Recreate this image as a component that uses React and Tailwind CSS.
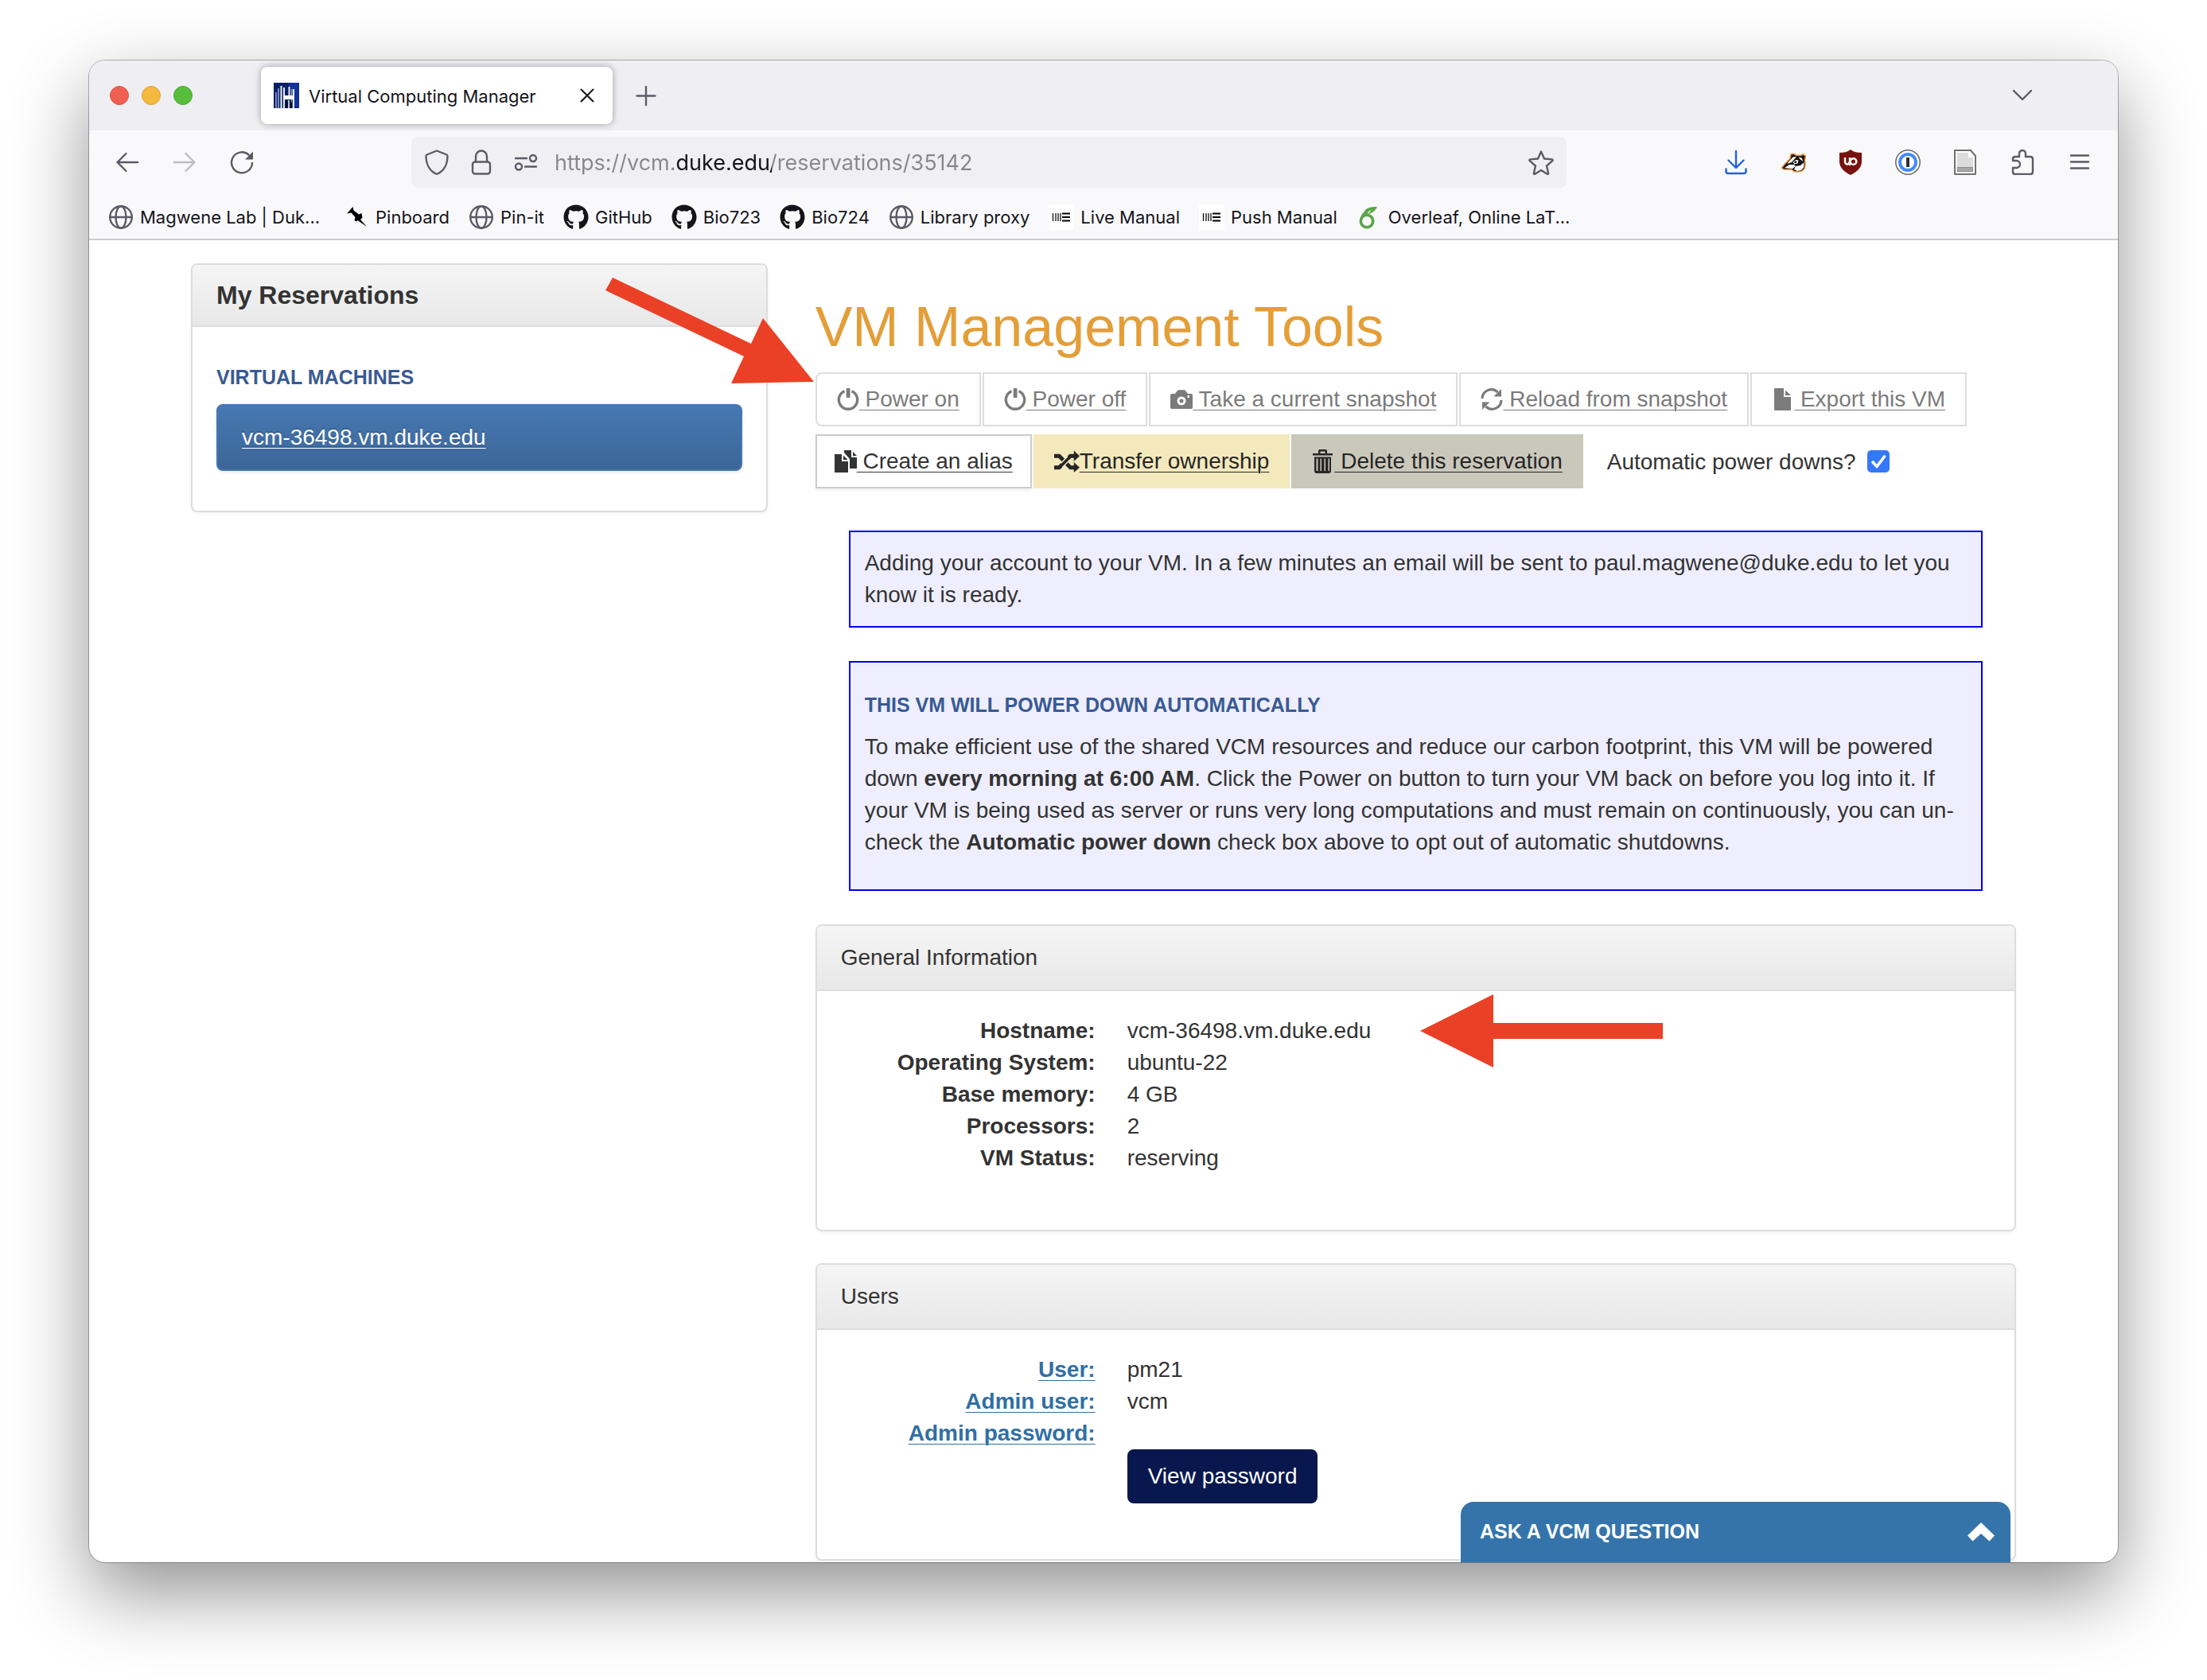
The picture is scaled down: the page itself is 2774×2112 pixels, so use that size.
import React from "react";
import { FaGithub } from "react-icons/fa";

const UI = "font-['Inter','Liberation_Sans',sans-serif]";

/* ---------- browser icons ---------- */

function Icon({ className = "h-8 w-8", children, box = "0 0 32 32" }) {
  return (
    <svg viewBox={box} className={`shrink-0 ${className}`} fill="none" stroke="currentColor" strokeWidth="2.4" strokeLinecap="round" strokeLinejoin="round" aria-hidden="true">
      {children}
    </svg>
  );
}

const ArrowLeft = () => (
  <Icon><path d="M29 16H3.5M14.500 5L3.500 16l11 11" /></Icon>
);
const ArrowRight = () => (
  <Icon><path d="M3 16h25.500M17.500 5l11 11-11 11" /></Icon>
);
const Reload = () => (
  <Icon>
    <path d="M29 17A13 13 0 1 1 24.500 6.500" />
    <path d="M30 2.500V12.500H20z" fill="currentColor" stroke="none" />
  </Icon>
);
const Globe = () => (
  <Icon>
    <circle cx="16" cy="16" r="13.800" />
    <ellipse cx="16" cy="16" rx="6.500" ry="13.800" />
    <path d="M2.500 16h27" />
  </Icon>
);
const Shield = () => (
  <Icon><path d="M16 1.500L28.500 6.500c.8.400 1 .9 1 1.800C29.500 19 24.500 27 17 30.500q-1 .5-2 0C7.500 27 2.500 19 2.500 8.300c0-.9.200-1.400 1-1.800z" /></Icon>
);
const Lock = () => (
  <Icon>
    <rect x="5" y="15.500" width="22" height="15" rx="3" />
    <path d="M9 15V8.500a7 7 0 0 1 14 0V15" />
  </Icon>
);
const Sliders = () => (
  <Icon>
    <path d="M3 11h14M15 21.500h14" />
    <circle cx="25" cy="11" r="4" />
    <circle cx="7" cy="21.500" r="4" />
  </Icon>
);
const Star = () => (
  <Icon><path d="M16 2.500l4 9 9.700.9c1 .1 1.300 1 .6 1.700L23 20.500l2.100 9.300c.2 1-.6 1.500-1.400 1L16 26l-7.700 4.800c-.8.500-1.600 0-1.400-1L9 20.500l-7.300-6.400c-.7-.7-.4-1.600.6-1.700l9.700-.9z" /></Icon>
);
const Download = () => (
  <Icon className="h-8 w-8 text-[#2161dc]">
    <path d="M16 2v20M6.500 13.500l9.500 9.500 9.500-9.500M3.500 24.500v3c0 1.500 1 2.500 2.500 2.500h20c1.500 0 2.500-1 2.500-2.500v-3" />
  </Icon>
);
const Badger = () => (
  <svg viewBox="0 0 32 32" className="h-8 w-8" aria-hidden="true">
    <path d="M1.500 23L6 17.500l6-6L13 6l3-.8 3.500 2 6 .3 2.500-1.500 3.500 2-1 5 .5 5.500-1 5.500-3 3-5 1-5-.5-3-2.500-10 0z" fill="#141414" stroke="#e88a33" strokeWidth="1.500" strokeLinejoin="round" />
    <path d="M8 18l7.500-8.500 4.500-.5-6 7z" fill="#fff" />
    <path d="M5 23l6-4 6 0 2 2-4 3z" fill="#fff" />
    <path d="M22.500 9.500l4 1 2 4.500-3.500-2.500z" fill="#fff" />
    <path d="M19 21l6-1 4.500-4-.5 6.500-3 3.500-5 1-4-2z" fill="#fff" />
    <path d="M15.500 16l3.500-3 3.500.5-1 4-4 1z" fill="#fff" />
    <circle cx="18.800" cy="15.800" r="1.500" fill="#141414" />
  </svg>
);
const UBlock = () => (
  <svg viewBox="0 0 32 32" className="h-8 w-8" aria-hidden="true">
    <path d="M16 0c4 3 8 4 14 4v11c0 8-6 13-14 17C8 28 2 23 2 15V4c6 0 10-1 14-4z" fill="#78120f" />
    <path d="M9 10v5.500a3 3 0 0 0 6 0V10M14 15.500q0 3.500 2 3.800" fill="none" stroke="#fff" strokeWidth="2.400" />
    <circle cx="19.500" cy="15" r="3.800" fill="none" stroke="#fff" strokeWidth="2.400" />
  </svg>
);
const OnePassword = () => (
  <svg viewBox="0 0 32 32" className="h-8 w-8" aria-hidden="true">
    <circle cx="16" cy="16" r="15.200" fill="#fff" stroke="#666" strokeWidth="1.500" />
    <circle cx="16" cy="16" r="10" fill="#fff" stroke="#438afa" strokeWidth="4" />
    <rect x="14" y="10" width="4" height="12" fill="#2f2f33" />
  </svg>
);
const DocIcon = () => (
  <svg viewBox="0 0 32 32" className="h-8 w-8" aria-hidden="true">
    <path d="M3 1h20l6 7v23H3z" fill="#fff" stroke="#707070" strokeWidth="2" strokeLinejoin="round" />
    <path d="M6 4h14v6h6v18H6z" fill="#dcdcdc" />
    <rect x="6.500" y="22.500" width="19" height="5" fill="#a8a8a8" stroke="#8c8c8c" />
  </svg>
);
const Puzzle = () => (
  <Icon><path d="M12 9V5a4 4 0 0 1 8 0v4h6c1.800 0 3 1 3 3v16c0 2-1.200 3-3 3H7c-2 0-3-1-3-3v-5h4.500a4 4 0 0 0 0-9H4v-2c0-2 1-3 3-3z" /></Icon>
);
const Menu = () => (
  <Icon><path d="M5 7.500h22M5 15.500h22M5 23.500h22" /></Icon>
);
const Pin = () => (
  <svg viewBox="0 0 32 32" className="h-8 w-8 shrink-0" fill="#000" aria-hidden="true">
    <path d="M11.500 3l1 4.500 6.500 5 3.500-1.500 1 5.500-2.500 2.500 8 9-11.500-8-1.500 1.500-2.500-1.500 1-4-5-5.500-5.500 1z" />
  </svg>
);
const Barcode = () => (
  <svg viewBox="0 0 32 32" className="h-8 w-8 shrink-0 bg-white" stroke="#000" aria-hidden="true">
    <path d="M5.500 11v10M9 11v10M12 11v10M15 11v10" strokeWidth="1.200" />
    <path d="M17 11.500h10M17 16h10M17 20.500h10" strokeWidth="1.800" />
  </svg>
);
const Overleaf = () => (
  <svg viewBox="0 0 32 32" className="h-8 w-8 shrink-0" fill="none" aria-hidden="true">
    <circle cx="13" cy="21" r="7.700" stroke="#59a548" strokeWidth="3.600" />
    <path d="M5 20C5 12 9 8 15 9l-2 4c-3 0-5 2-6 6z" fill="#59a548" />
    <path d="M9 11C11 4 17 3 26 3c-2 4-5 8-12 9l5-5c-4 1-6 3-7 6z" fill="#59a548" />
  </svg>
);
const Favicon = () => (
  <svg viewBox="0 0 32 32" className="h-8 w-8 shrink-0" aria-hidden="true">
    <rect width="32" height="32" fill="#0a1f66" />
    <path d="M18 0h14v32h-5z" fill="#12329a" />
    <path d="M3 12v20M6 7v25M22.500 8v24" stroke="#8fa0c4" strokeWidth="1.600" />
    <path d="M9.500 4v28M13 6v26M19.500 5v14M25 8v24" stroke="#e6ebf3" strokeWidth="2" />
    <path d="M12 16h13v5H12z" fill="#fff" />
    <path d="M14 32v-7l2-2 2 2v7zM20 32v-7l1.500-2 1.500 2v7z" fill="#0a1230" />
    <path d="M19 22v10" stroke="#c9d2e2" strokeWidth="1.800" />
  </svg>
);

/* ---------- page glyphs ---------- */

function Glyph({ children, className = "h-7 w-7", box = "0 0 28 28" }) {
  return (
    <svg viewBox={box} className={`shrink-0 ${className}`} fill="currentColor" aria-hidden="true">
      {children}
    </svg>
  );
}
const Power = () => (
  <Glyph>
    <path d="M9.500 3.800A11.700 11.700 0 1 0 18.500 3.800" fill="none" stroke="currentColor" strokeWidth="3.400" />
    <rect x="11.700" y="0" width="4.800" height="12" rx="1" />
  </Glyph>
);
const Camera = () => (
  <Glyph>
    <path fillRule="evenodd" d="M2 7h4l3-4q.8-.8 2-.8h6q1.200 0 2 .8l3 4h4q2 0 2 2v15q0 2-2 2H2q-2 0-2-2V9q0-2 2-2zm12 3.500a5.500 5.500 0 1 0 0 11 5.500 5.500 0 0 0 0-11zm0 3a2.500 2.500 0 1 1 0 5 2.500 2.500 0 0 1 0-5zM21.500 9v3h2.500V9z" />
  </Glyph>
);
const Refresh = () => (
  <Glyph>
    <path d="M2 13A11.500 11.500 0 0 1 21.500 5" fill="none" stroke="currentColor" strokeWidth="3.200" />
    <path d="M26 1v9.500h-9.500z" />
    <path d="M26 15A11.500 11.500 0 0 1 6.500 23" fill="none" stroke="currentColor" strokeWidth="3.200" />
    <path d="M2 27v-9.500h9.500z" />
  </Glyph>
);
const FileIcon = () => (
  <Glyph>
    <path d="M3 1q0-1 1-1h11v11h9v16q0 1-1 1H4q-1 0-1-1z" />
    <path d="M17 2.500l7 6.500h-7z" />
  </Glyph>
);
const Copy = () => (
  <Glyph>
    <path d="M0 5h9v9h8v14H0z" />
    <path d="M11 6.500l5.500 5.500H11z" />
    <path d="M12 0h9v9h7v14h-9V11l-7-8z" />
    <path d="M23 2l5 5h-5z" />
  </Glyph>
);
const Shuffle = () => (
  <Glyph className="h-7 w-8" box="0 0 33 28">
    <path d="M0 7h6.500L21 22h5M0 22h6.500L21 7h5" fill="none" stroke="currentColor" strokeWidth="5" />
    <path d="M25.500 0l7.500 7-7.500 7zM25.500 15l7.500 7-7.500 6.500z" />
    <path d="M8.500 16.500l9-9M11 21.500l9-9" stroke="#f4e9bd" strokeWidth="1.500" />
  </Glyph>
);
const Trash = () => (
  <Glyph className="h-8 w-7" box="0 0 28 32">
    <path fillRule="evenodd" d="M10 1h7q2 0 2 2v3h7v2.500H1V6h7V3q0-2 2-2zm.5 2.500V6h6V3.500zM3 10.500h21V28q0 3-3 3H6q-3 0-3-3zm2.500 2V28h2V12.500zm5 0V28h1.500V12.500zm5 0V28H17V12.500zm5 0V28h1.500V12.500z" />
  </Glyph>
);

/* ---------- parts ---------- */

const bookmarks = [
  { label: "Magwene Lab | Duk...", icon: <Globe />, wide: true },
  { label: "Pinboard", icon: <Pin /> },
  { label: "Pin-it", icon: <Globe /> },
  { label: "GitHub", icon: <FaGithub className="h-8 w-8 shrink-0 text-[#15141a]" /> },
  { label: "Bio723", icon: <FaGithub className="h-8 w-8 shrink-0 text-[#15141a]" /> },
  { label: "Bio724", icon: <FaGithub className="h-8 w-8 shrink-0 text-[#15141a]" /> },
  { label: "Library proxy", icon: <Globe /> },
  { label: "Live Manual", icon: <Barcode /> },
  { label: "Push Manual", icon: <Barcode /> },
  { label: "Overleaf, Online LaT...", icon: <Overleaf /> },
];

function Chrome() {
  return (
    <header className={`${UI} text-[#15141a]`}>
      <div className="flex h-22 items-center bg-[#efeef3] pl-[26px] pr-[108px]">
        <div className="mr-[86px] flex gap-4">
          <button aria-label="Close window" className="h-6 w-6 rounded-full border border-[#d9584a] bg-[#f06051]" />
          <button aria-label="Minimize window" className="h-6 w-6 rounded-full border border-[#dba239] bg-[#f6b940]" />
          <button aria-label="Zoom window" className="h-6 w-6 rounded-full border border-[#4ba534] bg-[#57bf3c]" />
        </div>
        <div className="flex h-18 w-[442px] items-center gap-3 rounded-lg bg-white px-4 shadow-[0_0_8px_rgba(0,0,0,0.35)]">
          <Favicon />
          <span className="grow pt-0.5 text-[22px]">Virtual Computing Manager</span>
          <button aria-label="Close tab" className="mr-1">
            <Icon className="h-6 w-6" box="0 0 24 24"><path d="M4.500 4.500l15 15M19.500 4.500l-15 15" strokeWidth="2" /></Icon>
          </button>
        </div>
        <button aria-label="New tab" className="ml-7 text-[#5b5b66]">
          <Icon className="h-7 w-7" box="0 0 28 28"><path d="M14 3v23M2.500 14.500h23" /></Icon>
        </button>
        <button aria-label="List all tabs" className="ml-auto text-[#5b5b66]">
          <Icon className="h-6 w-6" box="0 0 24 24"><path d="M1 6l11 11L23 6" /></Icon>
        </button>
      </div>

      <div className="flex h-20 items-center bg-[#f9f9fb] pl-8 pr-8 text-[#5b5b66]">
        <div className="flex gap-10">
          <button aria-label="Back"><ArrowLeft /></button>
          <button aria-label="Forward" className="text-[#bdbdc1]"><ArrowRight /></button>
          <button aria-label="Reload"><Reload /></button>
        </div>
        <div className="ml-[197px] flex h-16 w-[1452px] items-center gap-6 rounded-lg bg-[#f0eff4] px-4">
          <Shield />
          <Lock />
          <Sliders />
          <input
            aria-label="Address"
            defaultValue="https://vcm.duke.edu/reservations/35142"
            className="-ml-1 grow bg-[linear-gradient(90deg,#87878c_0_153px,#15141a_153px_273px,#87878c_273px)] bg-clip-text pt-0.5 text-[27px] text-transparent outline-none"
          />
          <button aria-label="Bookmark this page"><Star /></button>
        </div>
        <div className="ml-auto flex gap-10">
          <button aria-label="Downloads"><Download /></button>
          <button aria-label="Privacy Badger"><Badger /></button>
          <button aria-label="uBlock Origin"><UBlock /></button>
          <button aria-label="1Password"><OnePassword /></button>
          <button aria-label="Reader"><DocIcon /></button>
          <button aria-label="Extensions"><Puzzle /></button>
          <button aria-label="Menu"><Menu /></button>
        </div>
      </div>

      <nav className="flex h-[58px] items-center gap-6 border-b-2 border-[#cccccd] bg-[#f9f9fb] pt-0.5 pl-6">
        {bookmarks.map((b) => (
          <a key={b.label} href="#" className={`flex items-center gap-2 whitespace-nowrap text-[22px] ${b.wide ? "w-[272px]" : ""}`}>
            <span className="text-[#5b5b66]">{b.icon}</span>
            {b.label}
          </a>
        ))}
      </nav>
    </header>
  );
}

function ToolLink({ icon, label, className, tight }) {
  return (
    <a href="#" className={`flex h-17 items-center border-2 ${className}`}>
      {icon}
      <span className="whitespace-pre underline decoration-1 underline-offset-4">{tight ? label : " " + label}</span>
    </a>
  );
}

function Panel({ title, children }) {
  return (
    <section className="rounded-lg border-2 border-[#dddddd] bg-white shadow-[0_2px_4px_rgba(0,0,0,0.05)]">
      <h2 className="rounded-t-md border-b-2 border-[#dddddd] bg-linear-to-b from-[#f5f5f5] to-[#e8e8e8] px-[30px] py-5">{title}</h2>
      <div className="px-[30px] pt-[30px] pb-[70px]">
        <dl className="grid grid-cols-[320px_1fr] gap-x-10">{children}</dl>
      </div>
    </section>
  );
}

function Row({ label, link, children }) {
  return (
    <>
      <dt className="text-right font-bold">
        {link ? <a href="#" className="text-[#2f6fa5] underline decoration-1 underline-offset-4">{label}</a> : label}
      </dt>
      <dd>{children}</dd>
    </>
  );
}

function Sidebar() {
  return (
    <aside className="self-start rounded-lg border-2 border-[#dddddd] bg-white shadow-[0_2px_4px_rgba(0,0,0,0.05)]">
      <h2 className="rounded-t-md border-b-2 border-[#dddddd] bg-linear-to-b from-[#f5f5f5] to-[#e8e8e8] px-[30px] py-5 text-[32px] leading-9 font-bold">My Reservations</h2>
      <div className="px-[30px] pt-12 pb-[50px]">
        <h3 className="mb-[19px] text-[25px] leading-[30px] font-bold text-[#385a94]">VIRTUAL MACHINES</h3>
        <a href="#" className="block rounded-lg border-2 border-[#4577b2] bg-linear-to-b from-[#4778b3] to-[#3c6697] px-[30px] py-5 text-white underline decoration-1 underline-offset-4 shadow-[0_2px_4px_rgba(0,0,0,0.08)] [text-shadow:0_-2px_0_#36618f]">
          vcm-36498.vm.duke.edu
        </a>
      </div>
    </aside>
  );
}

function Tools() {
  const off = "px-[25px] border-[#dddddd] text-[#7b7b7b]";
  return (
    <div className="relative flex flex-col gap-2.5">
      <svg viewBox="0 0 264 134" className="absolute right-full bottom-[132px] h-[134px] w-[264px]" aria-hidden="true">
        <path d="M9 1L183 84 198 52 262 132 158 134 174 100 0 17z" fill="#ea4126" />
      </svg>
      <div className="flex gap-0.5">
        <ToolLink icon={<Power />} label="Power on" className={`rounded-l-lg ${off}`} />
        <ToolLink icon={<Power />} label="Power off" className={off} />
        <ToolLink icon={<Camera />} label="Take a current snapshot" className={off} />
        <ToolLink icon={<Refresh />} label="Reload from snapshot" className={off} />
        <ToolLink icon={<FileIcon />} label="Export this VM" className={off} />
      </div>
      <div className="flex items-center gap-0.5">
        <ToolLink icon={<Copy />} label="Create an alias" className="border-[#cccccc] px-[22px] text-[#333333] shadow-[0_2px_4px_rgba(0,0,0,0.08)]" />
        <ToolLink icon={<Shuffle />} label="Transfer ownership" tight className="border-[#f4e9bd] bg-[#f4e9bd] px-6 text-[#262626]" />
        <ToolLink icon={<Trash />} label="Delete this reservation" className="border-[#cac8bb] bg-[#cac8bb] px-6 text-[#262626]" />
        <label htmlFor="auto" className="ml-7 pt-0.5">Automatic power downs?</label>
        <span className="relative ml-3 flex">
          <input id="auto" type="checkbox" defaultChecked className="peer h-7 w-7 appearance-none rounded-[5px] border-2 border-[#8f8f9d] checked:border-[#3578f7] checked:bg-[#3578f7]" />
          <svg viewBox="0 0 28 28" className="pointer-events-none absolute inset-0 hidden peer-checked:block" fill="none" stroke="#fff" strokeWidth="3.600" strokeLinecap="round" strokeLinejoin="round" aria-hidden="true">
            <path d="M7 15l5 5.500L21.500 8" />
          </svg>
        </span>
      </div>
    </div>
  );
}

export default function App() {
  return (
    <div className="bg-white px-28 pt-19 pb-37">
      <div className="relative overflow-clip rounded-[20px] bg-white shadow-[0_0_0_1px_rgba(0,0,0,0.28),0_38px_96px_rgba(0,0,0,0.43)]">
        <Chrome />
        <div className="grid grid-cols-[725fr_1510fr] gap-15 px-32 pt-[29px] pb-0.5 font-['Liberation_Sans',Arial,sans-serif] text-[28px] leading-10 text-[#333333]">
          <Sidebar />
          <main className="pt-10">
            <h1 className="mb-[17px] text-[70px] leading-20 text-[#e49e38]">VM Management Tools</h1>
            <Tools />
            <div className="mx-[42px] mt-[53px] flex flex-col gap-[42px]">
              <div className="border-2 border-[#0000ff] bg-[#eeeefe] px-[18px] py-[19px]">
                Adding your account to your VM. In a few minutes an email will be sent to paul.magwene@duke.edu to let you know it is ready.
              </div>
              <div className="border-2 border-[#0000ff] bg-[#eeeefe] px-[18px] pt-[38px] pb-[39px]">
                <h3 className="mb-[18px] text-[25px] leading-[30px] font-bold text-[#385a94]">THIS VM WILL POWER DOWN AUTOMATICALLY</h3>
                <p>
                  To make efficient use of the shared VCM resources and reduce our carbon footprint, this VM will be powered down <b>every morning at 6:00 AM</b>. Click the Power on button to turn your VM back on before you log into it. If your VM is being used as server or runs very long computations and must remain on continuously, you can un-check the <b>Automatic power down</b> check box above to opt out of automatic shutdowns.
                </p>
              </div>
            </div>
            <div className="mt-[42px] flex flex-col gap-10">
              <Panel title="General Information">
                <Row label="Hostname:">
                  <span className="relative">
                    vcm-36498.vm.duke.edu
                    <svg viewBox="0 0 305 92" className="absolute top-1/2 left-full ml-[62px] h-[92px] w-[305px] -translate-y-1/2" aria-hidden="true">
                      <path d="M0 46L92 0V36H305V56H92V92z" fill="#ea4126" />
                    </svg>
                  </span>
                </Row>
                <Row label="Operating System:">ubuntu-22</Row>
                <Row label="Base memory:">4 GB</Row>
                <Row label="Processors:">2</Row>
                <Row label="VM Status:">reserving</Row>
              </Panel>
              <Panel title="Users">
                <Row link label="User:">pm21</Row>
                <Row link label="Admin user:">vcm</Row>
                <Row link label="Admin password:">
                  <button className="mt-10 block rounded-lg border-2 border-[#08184f] bg-[#08184f] px-6 py-3 text-white">View password</button>
                </Row>
              </Panel>
            </div>
          </main>
        </div>
        <button className="absolute right-[135px] bottom-0 flex h-19 w-[691px] items-center justify-between rounded-t-2xl bg-[#3574ab] px-5 pl-6 font-['Liberation_Sans',Arial,sans-serif] text-[25px] font-bold text-white">
          ASK A VCM QUESTION
          <svg viewBox="0 0 34 24" className="h-6 w-[34px]" fill="#fff" aria-hidden="true">
            <path d="M17 0l17 16.500-6.500 7L17 14 6.500 23.500 0 16.500z" />
          </svg>
        </button>
      </div>
    </div>
  );
}
